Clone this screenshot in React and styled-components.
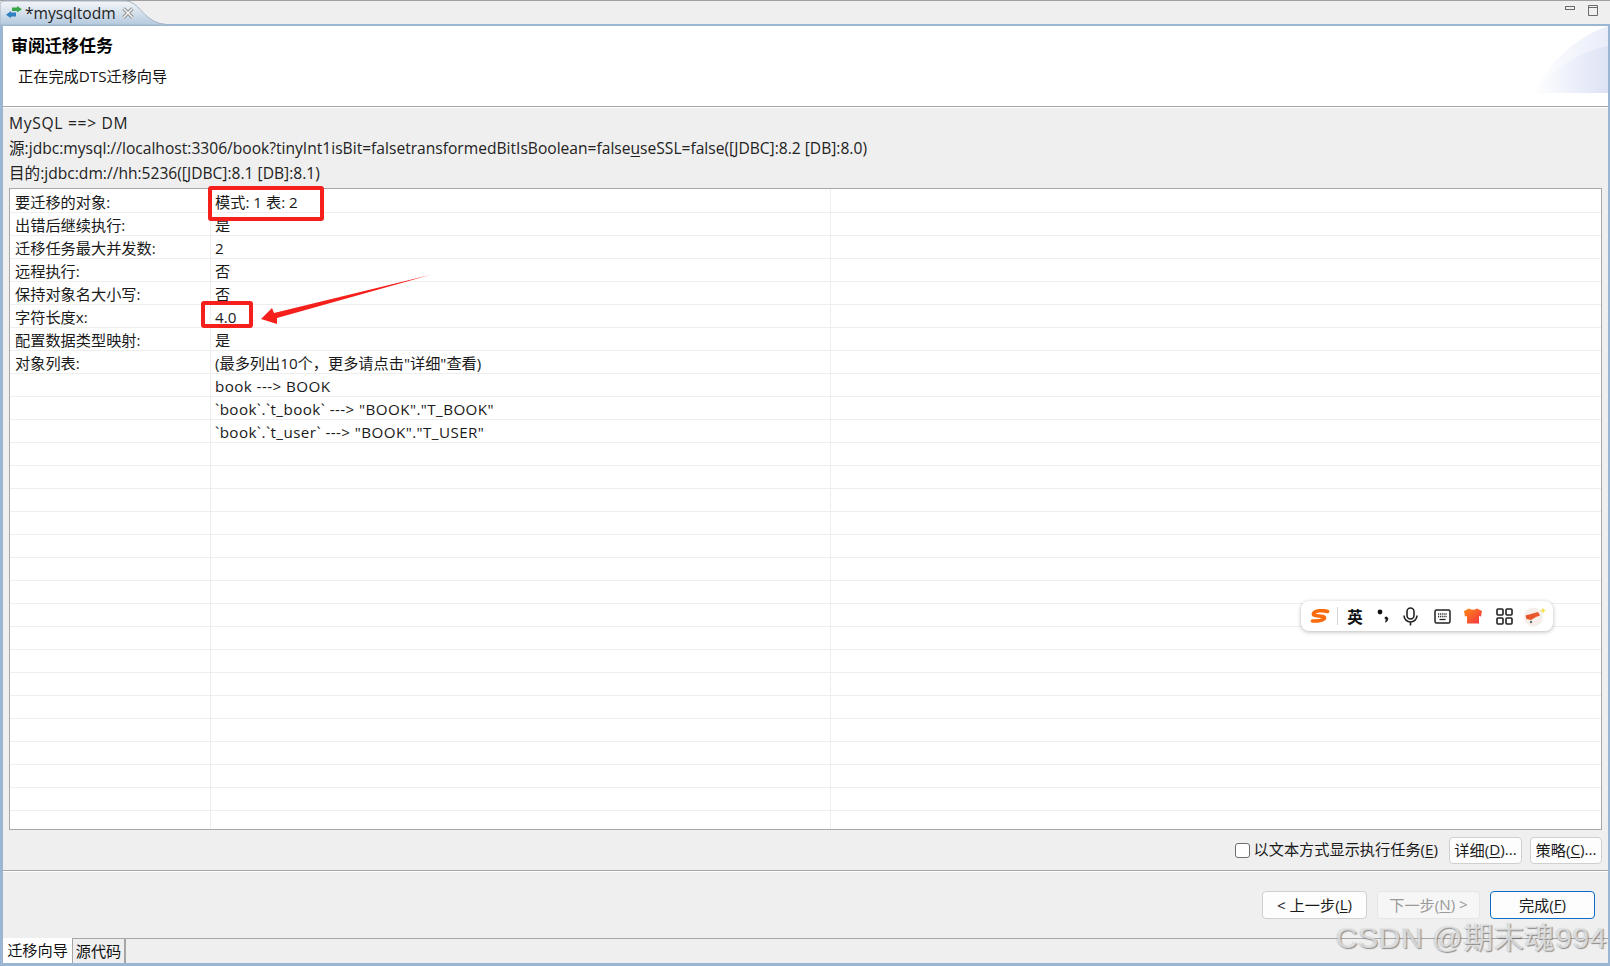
import React from "react";
import styled, { createGlobalStyle } from "styled-components";

const FONT = `"Open Sans", "Noto Sans CJK SC", sans-serif`;

const Global = createGlobalStyle`
  html, body { margin: 0; padding: 0; background: #efefef; }
  body { width: 1610px; height: 966px; overflow: hidden; font-family: ${FONT}; color: #111; }
  * { box-sizing: border-box; }
`;

const Page = styled.div`
  position: relative;
  width: 1610px;
  height: 966px;
  display: flex;
  flex-direction: column;
  background: #efefef;
  overflow: hidden;
`;
const TabBar = styled.div`
  position: relative;
  height: 24px;
  flex: none;
  display: flex;
  align-items: flex-start;
  justify-content: flex-end;
  gap: 11px;
  padding: 3px 11px 0 0;
  background: #efefef;
  border-top: 1px solid #a0a0a0;
`;
const TabShape = styled.svg`
  position: absolute;
  left: 0;
  top: -1px;
  width: 170px;
  height: 25px;
`;
const TabContent = styled.div`
  position: absolute;
  left: 5px;
  top: 0;
  height: 23px;
  display: flex;
  align-items: center;
  gap: 2px;
  font-size: 15.6px;
  color: #222;
`;
const TabClose = styled.svg`
  display: block;
  margin-left: 3px;
`;
const WinButton = styled.svg`
  display: block;
  width: 12px;
  height: 12px;
`;
const Frame = styled.div`
  flex: 1;
  min-height: 0;
  display: flex;
  flex-direction: column;
  border: 3px solid #9ab6d2;
  border-top-width: 2px;
  border-right-width: 2px;
`;
const Banner = styled.div`
  position: relative;
  height: 81px;
  flex: none;
  padding: 9px 0 0 8px;
  background: #fff;
  border-bottom: 1px solid #a6a6a6;
  overflow: hidden;
`;
const BannerTitle = styled.div`
  font-size: 17px;
  line-height: 22px;
  font-weight: 700;
  color: #000;
`;
const BannerDesc = styled.div`
  font-size: 15.2px;
  line-height: 20px;
  margin: 9px 0 0 7px;
  color: #111;
`;
const BannerArt = styled.svg`
  position: absolute;
  right: 0;
  top: 0;
  width: 75px;
  height: 67px;
`;
const Body = styled.div`
  flex: 1;
  min-height: 0;
  display: flex;
  flex-direction: column;
  padding: 3px 6px 0 6px;
  border-top: 1px solid #fff;
`;
const InfoLine = styled.div`
  font-size: 15.6px;
  line-height: 25px;
  height: 25px;
  white-space: nowrap;
  color: #222;
  letter-spacing: ${(p) => p.$spread || 0}px;
`;
const Table = styled.div`
  margin-top: 2px;
  height: 642px;
  flex: none;
  background: #fff;
  border: 1px solid #a8a8a8;
  overflow: hidden;
`;
const Row = styled.div`
  display: grid;
  grid-template-columns: 200px 620px 1fr;
  height: 23px;
  border-bottom: 1px solid #eeeeee;
  font-size: 15.2px;
  &:first-child {
    height: 24px;
    line-height: 26px;
  }
`;
const Cell = styled.div`
  padding-left: ${(p) => p.$pad}px;
  line-height: 24px;
  white-space: nowrap;
  border-left: ${(p) => (p.$line ? "1px solid #eeeeee" : "0")};
  color: #1a1a1a;
  letter-spacing: ${(p) => (p.$spread ? "0.42px" : "0")};
  ${Row}:first-child & {
    line-height: 26px;
  }
`;
const OptionBar = styled.div`
  height: 40px;
  flex: none;
  display: flex;
  align-items: center;
  justify-content: flex-end;
  gap: 8px;
`;
const CheckLabel = styled.label`
  display: flex;
  align-items: center;
  gap: 4px;
  font-size: 15.2px;
  line-height: 20px;
  color: #1a1a1a;
  margin-right: 3px;
  & > span:last-child {
    margin-top: -2px;
  }
`;
const CheckBox = styled.span`
  width: 15px;
  height: 15px;
  background: #fff;
  border: 1px solid #6e6e6e;
  border-radius: 3px;
`;
const Button = styled.div`
  width: ${(p) => p.$w}px;
  height: ${(p) => p.$h}px;
  display: flex;
  align-items: center;
  justify-content: center;
  padding-bottom: 2px;
  font-size: 15.2px;
  white-space: nowrap;
  background: ${(p) => (p.$disabled ? "#f6f6f6" : "#fdfdfd")};
  color: ${(p) => (p.$disabled ? "#9a9a9a" : "#1a1a1a")};
  border: ${(p) => (p.$primary ? "1.5px solid #0a6fc4" : p.$disabled ? "1px solid #e6e6e6" : "1px solid #d0d0d0")};
  border-radius: 4px;
`;
const Key = styled.span`
  text-decoration: underline;
  text-underline-offset: 2px;
`;
const Separator = styled.div`
  height: 2px;
  flex: none;
  margin: 0 -6px;
  background: #a6a6a6;
  border-bottom: 1px solid #fff;
`;
const NavBar = styled.div`
  height: 66px;
  flex: none;
  display: flex;
  justify-content: flex-end;
  align-items: flex-start;
  gap: 10px;
  padding: 19px 7px 0 0;
`;
const BottomTabs = styled.div`
  flex: 1;
  min-height: 0;
  margin: 0 -6px;
  display: flex;
  align-items: stretch;
  border-top: 1px solid #a6a6a6;
`;
const BottomTab = styled.div`
  width: ${(p) => p.$w}px;
  display: flex;
  align-items: center;
  justify-content: center;
  padding-bottom: 3px;
  font-size: 15.2px;
  background: ${(p) => (p.$active ? "#fff" : "#efefef")};
  margin-top: ${(p) => (p.$active ? "-1px" : "0")};
  border-right: ${(p) => (p.$active ? "1px solid #a6a6a6" : "2px solid #a6a6a6")};
  color: #111;
`;
const RedBox = styled.div`
  position: absolute;
  left: ${(p) => p.$x}px;
  top: ${(p) => p.$y}px;
  width: ${(p) => p.$w}px;
  height: ${(p) => p.$h}px;
  border: 4px solid #f5201c;
  border-radius: 3px;
`;
const Arrow = styled.svg`
  position: absolute;
  left: 255px;
  top: 270px;
  width: 180px;
  height: 60px;
`;
const Ime = styled.div`
  position: absolute;
  left: 1301px;
  top: 601px;
  width: 252px;
  height: 30px;
  display: flex;
  align-items: center;
  padding: 0 2px;
  background: #fff;
  border-radius: 8px;
  box-shadow: 0 1px 4px rgba(0, 0, 0, 0.28);
`;
const ImeSlot = styled.div`
  flex: none;
  width: ${(p) => p.$w}px;
  display: flex;
  align-items: center;
  justify-content: center;
  font-size: 15.5px;
  font-weight: 700;
  color: #111;
`;
const ImeDivider = styled.div`
  flex: none;
  width: 1px;
  height: 18px;
  background: #d4d4d4;
`;
const Watermark = styled.div`
  position: absolute;
  left: 1336px;
  top: 919px;
  font-size: 30px;
  line-height: 38px;
  letter-spacing: 0.6px;
  white-space: nowrap;
  font-family: "Liberation Sans", "Noto Sans CJK SC", sans-serif;
  color: rgba(235, 235, 235, 0.75);
  text-shadow: 1px 1px 1px rgba(90, 90, 90, 0.65), -1px 0 1px rgba(130, 130, 130, 0.25);
`;

const rows = [
  ["要迁移的对象:", "模式: 1 表: 2"],
  ["出错后继续执行:", "是"],
  ["迁移任务最大并发数:", "2"],
  ["远程执行:", "否"],
  ["保持对象名大小写:", "否"],
  ["字符长度x:", "4.0"],
  ["配置数据类型映射:", "是"],
  ["对象列表:", '(最多列出10个\uFF0C更多请点击"详细"查看)'],
  ["", "book ---> BOOK", true],
  ["", '`book`.`t_book` ---> "BOOK"."T_BOOK"', true],
  ["", '`book`.`t_user` ---> "BOOK"."T_USER"', true],
];
const allRows = [...rows, ...Array.from({ length: 17 }, () => ["", ""])];

export default function App() {
  return (
    <Page>
      <Global />
      <TabBar>
        <TabShape viewBox="0 0 170 25">
          <defs>
            <linearGradient id="tabGrad" x1="0" y1="0" x2="0" y2="1">
              <stop offset="0" stopColor="#f4f6f9" />
              <stop offset="1" stopColor="#b4c9de" />
            </linearGradient>
          </defs>
          <path d="M0 25V5Q0 1 5 1H126C138 1 143 19 160 23.5L170 25Z" fill="url(#tabGrad)" stroke="#a4b4c6" strokeWidth="1" />
        </TabShape>
        <TabContent>
          <svg width="18" height="14" viewBox="0 0 18 14">
            <path d="M7 1.5h5V0l5 3.2-5 3.2V5H7z" fill="#3aa44a" />
            <path d="M11 6.5H6V5L1 8.7l5 3.6v-1.8h5z" fill="#2f7fc1" />
          </svg>
          <span>*mysqltodm</span>
          <TabClose width="14" height="14" viewBox="0 0 14 14">
            <path d="M2.5 2.5l9 9m0-9l-9 9" stroke="#8a8a8a" strokeWidth="3.4" />
            <path d="M2.5 2.5l9 9m0-9l-9 9" stroke="#f8f8f8" strokeWidth="1.5" />
          </TabClose>
        </TabContent>
        <WinButton viewBox="0 0 12 12">
          <rect x="1.5" y="2.5" width="9" height="3" fill="none" stroke="#6b6b6b" />
        </WinButton>
        <WinButton viewBox="0 0 12 12">
          <path d="M1.5 1.5h9v10h-9zM1.5 3.5h9" fill="none" stroke="#6b6b6b" />
        </WinButton>
      </TabBar>
      <Frame>
        <Banner>
          <BannerTitle>审阅迁移任务</BannerTitle>
          <BannerDesc>正在完成DTS迁移向导</BannerDesc>
          <BannerArt viewBox="0 0 75 67">
            <defs>
              <linearGradient id="artA" x1="0" y1="0" x2="1" y2="0">
                <stop offset="0" stopColor="#fff" />
                <stop offset="1" stopColor="#e9edf9" />
              </linearGradient>
              <linearGradient id="artB" x1="0" y1="0" x2="1" y2="0">
                <stop offset="0" stopColor="#fff" />
                <stop offset="1" stopColor="#dde3f5" />
              </linearGradient>
            </defs>
            <path d="M0 67C14 40 40 12 75 0V67Z" fill="url(#artA)" />
            <path d="M0 67C16 45 45 26 75 20V67Z" fill="url(#artB)" />
          </BannerArt>
        </Banner>
        <Body>
          <InfoLine $spread={0.7}>MySQL ==&gt; DM</InfoLine>
          <InfoLine>源:jdbc:mysql://localhost:3306/book?tinyInt1isBit=falsetransformedBitIsBoolean=false<Key>u</Key>seSSL=false([JDBC]:8.2 [DB]:8.0)</InfoLine>
          <InfoLine>目的:jdbc:dm://hh:5236([JDBC]:8.1 [DB]:8.1)</InfoLine>
          <Table>
            {allRows.map((r, i) => (
              <Row key={i}>
                <Cell $pad={5}>{r[0]}</Cell>
                <Cell $pad={4} $line $spread={r[2]}>{r[1]}</Cell>
                <Cell $pad={0} $line />
              </Row>
            ))}
          </Table>
          <OptionBar>
            <CheckLabel>
              <CheckBox />
              <span>以文本方式显示执行任务(<Key>E</Key>)</span>
            </CheckLabel>
            <Button $w={73} $h={27}>详细(<Key>D</Key>)...</Button>
            <Button $w={72} $h={27}>策略(<Key>C</Key>)...</Button>
          </OptionBar>
          <Separator />
          <NavBar>
            <Button $w={105} $h={28}>&lt; 上一步(<Key>L</Key>)</Button>
            <Button $w={103} $h={28} $disabled>下一步(<Key>N</Key>) &gt;</Button>
            <Button $w={105} $h={28} $primary>完成(<Key>F</Key>)</Button>
          </NavBar>
          <BottomTabs>
            <BottomTab $w={70} $active>迁移向导</BottomTab>
            <BottomTab $w={53}>源代码</BottomTab>
          </BottomTabs>
        </Body>
      </Frame>
      <RedBox $x={208} $y={186} $w={116} $h={35} />
      <RedBox $x={201} $y={301} $w={52} $h={27} />
      <Arrow viewBox="0 0 180 60">
        <path d="M6 49L17 38L19 43L175 5L22 48L22 54Z" fill="#f5201c" />
      </Arrow>
      <Ime>
        <ImeSlot $w={34}>
          <svg width="20" height="15" viewBox="0 0 20 15">
            <path d="M17.5 2.5C12 1 5 1.5 3.5 4.5C2.5 7.5 9 6.5 13 7.5C17 9 13 12.5 2.5 12" fill="none" stroke="#fb6a0d" strokeWidth="3.6" strokeLinecap="round" />
          </svg>
        </ImeSlot>
        <ImeDivider />
        <ImeSlot $w={34}>英</ImeSlot>
        <ImeSlot $w={22}>
          <svg width="12" height="15" viewBox="0 0 12 15">
            <circle cx="3" cy="3" r="2.4" fill="#111" />
            <path d="M8.5 8a1.8 1.8 0 0 1 2.3 1.8c0 1.6-1 2.8-2.2 3.4l.7-2.6a1.6 1.6 0 0 1-.8-2.6z" fill="#111" stroke="#111" strokeWidth="0.8" />
          </svg>
        </ImeSlot>
        <ImeSlot $w={32}>
          <svg width="15" height="19" viewBox="0 0 15 19">
            <rect x="4" y="1" width="7" height="11" rx="3.5" fill="none" stroke="#222" strokeWidth="1.6" />
            <path d="M1 8.5a6.5 6.5 0 0 0 13 0M7.5 15v3.5" fill="none" stroke="#222" strokeWidth="1.6" />
          </svg>
        </ImeSlot>
        <ImeSlot $w={32}>
          <svg width="17" height="15" viewBox="0 0 17 15">
            <rect x="1" y="1" width="15" height="13" rx="1.5" fill="none" stroke="#222" strokeWidth="1.5" />
            <path d="M4 5h9M4 7.5h9" stroke="#222" strokeWidth="1.3" strokeDasharray="1.2 0.9" />
            <path d="M5.5 10.5h6" stroke="#222" strokeWidth="1.3" />
          </svg>
        </ImeSlot>
        <ImeSlot $w={30}>
          <svg width="18" height="16" viewBox="0 0 18 16">
            <defs>
              <linearGradient id="shirt" x1="0" y1="0" x2="1" y2="1">
                <stop offset="0" stopColor="#ff8a14" />
                <stop offset="1" stopColor="#f22f45" />
              </linearGradient>
            </defs>
            <path d="M5 0.5Q9 3 13 0.5L18 3L17 8.5L15 8V15.5H3V8L1 8.5L0 3Z" fill="url(#shirt)" />
          </svg>
        </ImeSlot>
        <ImeSlot $w={32}>
          <svg width="17" height="17" viewBox="0 0 17 17" fill="none" stroke="#222" strokeWidth="1.6">
            <rect x="1" y="1" width="6" height="6" rx="1" />
            <rect x="10" y="1" width="6" height="6" rx="1" />
            <rect x="1" y="10" width="6" height="6" rx="1" />
            <rect x="10" y="10" width="6" height="6" rx="1" />
          </svg>
        </ImeSlot>
        <ImeSlot $w={30}>
          <svg width="24" height="21" viewBox="0 0 24 21">
            <circle cx="10.5" cy="11" r="9.5" fill="#f6eeea" />
            <path d="M2.5 9.5L15 6L17 9.5L13 11L8 14L3.5 13Z" fill="#e8562a" />
            <circle cx="8" cy="16" r="1.2" fill="#6b6b6b" />
            <path d="M20 1.5l.9 2.2 2.2.9-2.2.9-.9 2.2-.9-2.2-2.2-.9 2.2-.9z" fill="#f6dd4a" />
          </svg>
        </ImeSlot>
      </Ime>
      <Watermark>CSDN @期末魂994</Watermark>
    </Page>
  );
}
